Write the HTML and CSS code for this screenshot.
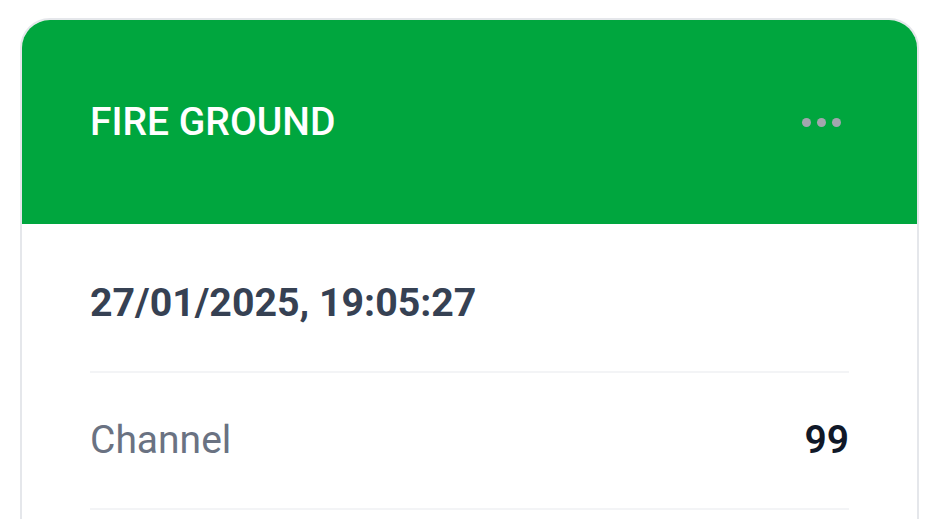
FILE: index.html
```html
<!DOCTYPE html>
<html>
<head>
<meta charset="utf-8">
<link rel="stylesheet" href="styles.css">
</head>
<body>
<div class="page">
  <div class="card">
    <div class="card-header">
      <div class="title">FIRE GROUND</div>
      <div class="menu" aria-label="More">
        <span class="dot"></span><span class="dot"></span><span class="dot"></span>
      </div>
    </div>
    <div class="card-body">
      <div class="row date-row">
        <div class="date">27/01/2025, 19:05:27</div>
      </div>
      <div class="row">
        <div class="label">Channel</div>
        <div class="value">99</div>
      </div>
    </div>
  </div>
</div>
</body>
</html>
```
FILE: styles.css
```css
* { box-sizing: border-box; }
html, body {
  margin: 0;
  padding: 0;
  background: #ffffff;
  font-family: Roboto, "Liberation Sans", Arial, sans-serif;
  overflow: hidden;
}
.page {
  padding: 18px 9px 0 20px;
}
.card {
  border: 2px solid #e5e7eb;
  border-radius: 30px;
  overflow: hidden;
  background: #ffffff;
}
.card-header {
  background: #00a63e;
  height: 204px;
  padding: 0 68px;
  display: flex;
  align-items: center;
  justify-content: space-between;
}
.title {
  color: #ffffff;
  font-size: 39px;
  font-weight: 500;
  line-height: 60px;
}
.menu {
  display: flex;
  gap: 6px;
  margin-right: 8px;
}
.dot {
  width: 9px;
  height: 9px;
  border-radius: 50%;
  background: #a3a6ae;
}
.card-body {
  padding: 12px 68px 80px;
}
.row {
  display: flex;
  justify-content: space-between;
  align-items: center;
  padding: 37px 0 38px;
  border-bottom: 2px solid #f3f4f6;
}
.date {
  color: #364153;
  font-size: 39.3px;
  font-weight: 700;
  line-height: 60px;
}
.label {
  color: #6a7282;
  font-size: 39px;
  font-weight: 400;
  line-height: 60px;
}
.value {
  color: #101828;
  font-size: 39px;
  font-weight: 600;
  line-height: 60px;
}
```
